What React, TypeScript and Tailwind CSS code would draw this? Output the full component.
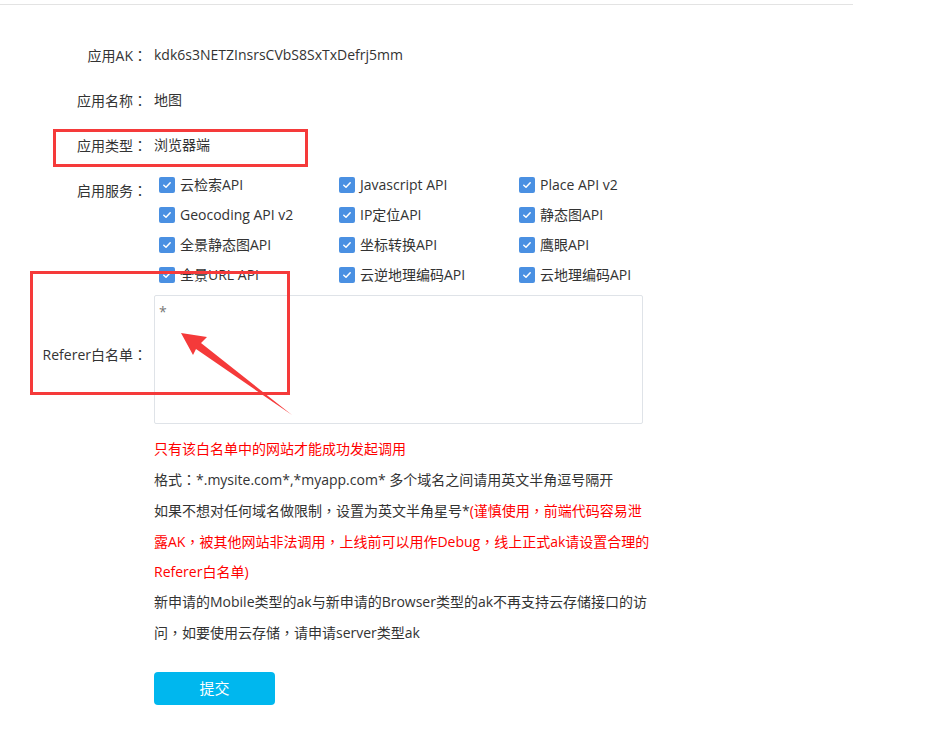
import React from 'react';

const services: string[] = [
  '云检索API', 'Javascript API', 'Place API v2',
  'Geocoding API v2', 'IP定位API', '静态图API',
  '全景静态图API', '坐标转换API', '鹰眼API',
  '全景URL API', '云逆地理编码API', '云地理编码API',
];

// full-width punctuation centred in its box, the way the original font draws it
const P = ({ text }: { text: string }) => (
  <>
    {text.split(/([：，])/).map((part, i) =>
      part === '：' || part === '，' ? (
        <span key={i} style={{ fontFamily: '"Noto Sans CJK TC", sans-serif' }}>
          {part}
        </span>
      ) : (
        <React.Fragment key={i}>{part}</React.Fragment>
      )
    )}
  </>
);

const Checked = () => (
  <span className="w-4 h-4 rounded-[2px] bg-[#4a90e2] flex items-center justify-center shrink-0">
    <svg width="10" height="10" viewBox="0 0 10 10" fill="none">
      <path d="M1.8 5.2 L4 7.2 L8.2 2.8" stroke="#fff" strokeWidth="1.5" strokeLinecap="round" strokeLinejoin="round" />
    </svg>
  </span>
);

const Row = ({ label, children, className = '' }: { label: string; children?: React.ReactNode; className?: string }) => (
  <div className={`flex ${className}`}>
    <div className="w-[147px] text-right shrink-0 h-5 leading-5"><P text={label} /></div>
    <div className="ml-[7px] h-5 leading-5">{children}</div>
  </div>
);

export default function App() {
  return (
    <div
      className="relative w-[937px] min-h-[729px] bg-white text-[14px] text-[#333]"
      style={{ fontFamily: '"Open Sans", "Noto Sans CJK SC", sans-serif' }}
    >
      <div className="pt-[4px]">
        <div className="w-[853px] h-px bg-[#e3e3e3]" />
      </div>

      <div className="pt-[40px]">
        <Row label="应用AK：">kdk6s3NETZInsrsCVbS8SxTxDefrj5mm</Row>
        <Row label="应用名称：" className="mt-[25px]">地图</Row>
        <Row label="应用类型：" className="mt-[25px]">浏览器端</Row>

        <div className="flex mt-[15px]">
          <div className="w-[147px] text-right shrink-0 pt-[10px] h-[30px] leading-5"><P text="启用服务：" /></div>
          <div className="ml-[12px] grid grid-cols-[180px_180px_180px]">
            {services.map((s) => (
              <label key={s} className="h-[30px] flex items-center gap-[5px]">
                <Checked />
                <span className="leading-5">{s}</span>
              </label>
            ))}
          </div>
        </div>

        <div className="flex mt-[5px]">
          <div className="w-[147px] text-right shrink-0 pt-[49px] leading-5"><P text="Referer白名单：" /></div>
          <div className="ml-[7px] w-[489px] h-[129px] border border-[#dfe3e8] rounded-[2px] px-[4px] pt-[6px] text-[#777] leading-5">
            *
          </div>
        </div>

        <div className="ml-[154px] mt-[10px] leading-[30px]">
          <div className="text-[#f00]">只有该白名单中的网站才能成功发起调用</div>
          <div><P text="格式：*.mysite.com*,*myapp.com* 多个域名之间请用英文半角逗号隔开" /></div>
          <div>
            <P text="如果不想对任何域名做限制，设置为英文半角星号*" />
            <span className="text-[#f00]"><P text="(谨慎使用，前端代码容易泄" /></span>
          </div>
          <div className="text-[#f00]"><P text="露AK，被其他网站非法调用，上线前可以用作Debug，线上正式ak请设置合理的" /></div>
          <div className="text-[#f00]">Referer白名单)</div>
          <div>新申请的Mobile类型的ak与新申请的Browser类型的ak不再支持云存储接口的访</div>
          <div><P text="问，如要使用云存储，请申请server类型ak" /></div>
        </div>

        <div className="ml-[154px] mt-[24px]">
          <button className="w-[121px] h-[33px] rounded-[4px] bg-[#00b7ee] text-white text-[15px]">提交</button>
        </div>
      </div>

      {/* annotations */}
      <div className="absolute left-[53px] top-[129px] w-[255px] h-[38px] border-[3px] border-[#f53a3a]" />
      <div className="absolute left-[30px] top-[271px] w-[260px] h-[124px] border-[3px] border-[#f53a3a]" />
      <svg className="absolute left-0 top-0 pointer-events-none" width="937" height="729">
        <polygon points="181,333 207,337 201,343 292,415 196,349 193,355" fill="#f53a3a" />
      </svg>
    </div>
  );
}
